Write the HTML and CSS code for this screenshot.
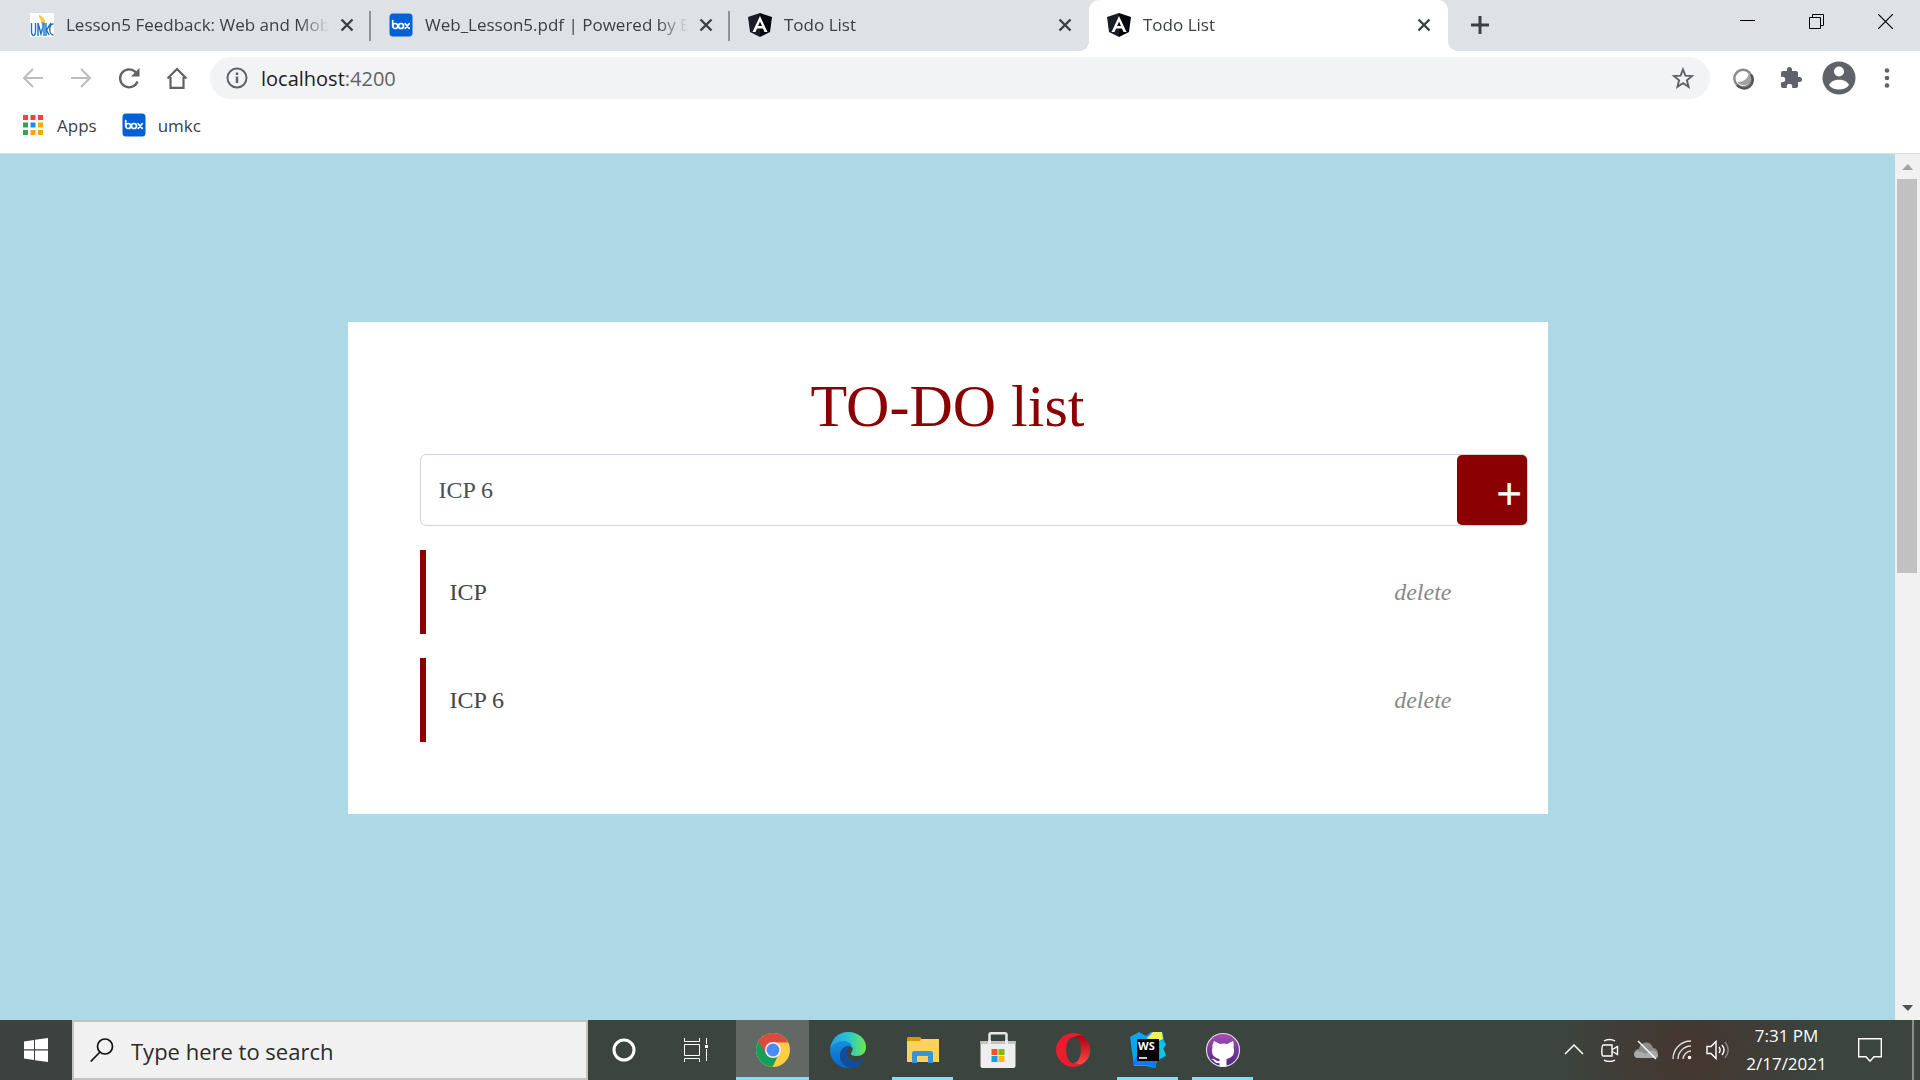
FILE: index.html
```html
<!DOCTYPE html>
<html lang="en">
<head>
<meta charset="utf-8">
<title>Todo List</title>
<link rel="stylesheet" href="styles.css">
</head>
<body>
<svg class="defs" aria-hidden="true">
  <symbol id="close" viewBox="0 0 16 16"><path d="M2.500 2.500l11 11M13.500 2.500l-11 11" fill="none" stroke="#3c4043" stroke-width="2.400"/></symbol>
  <symbol id="angular" viewBox="0 0 24 24"><path d="M12 0L0 4l2 15 10 5z" fill="#1a1d25"/><path d="M12 0l12 4-2 15-10 5z" fill="#05060c"/><path d="M12 3L4.500 19h3l1.600-3.600h5.800l1.600 3.600h3zm0 5.500l2 4.500h-4z" fill="#fff" fill-rule="evenodd"/></symbol>
  <symbol id="box" viewBox="0 0 24 24"><rect x=".5" y=".5" width="23" height="23" rx="3.500" fill="#0061d5"/><g fill="none" stroke="#fff" stroke-width="1.700" stroke-linecap="round" stroke-linejoin="round"><path d="M3.700 7.500v5.500"/><circle cx="6.200" cy="13" r="2.500"/><circle cx="12" cy="13" r="2.500"/><path d="M16.200 10.700l4 4.700M20.200 10.700l-4 4.700"/></g></symbol>
</svg>

<header class="browser">
  <nav class="tabs" aria-label="Tabs">
    <div class="tab">
      <svg class="favicon" viewBox="0 0 24 24"><path d="M0 0h24v24H0z" fill="#fff"/><path d="M9 2c3 1 7 4 6 8l-3 2c1-4-3-5-3-10z" fill="#f5cf2e"/><path d="M1.500 10v8c0 6 4 6 4 0v-8M8 23V10l3 11 3-11v13M16 10v13M21 10l-4.500 7L19 22M23.500 11c-5-1-5 11 0 11" fill="none" stroke="#1c72c4" stroke-width="1.400"/><path d="M12 9l2 10" stroke="#53a5df" stroke-width="1.500"/></svg>
      <span class="tab-title">Lesson5 Feedback: Web and Mobile</span>
      <button class="tab-close" aria-label="Close tab"><svg><use href="#close"/></svg></button>
    </div>
    <div class="tab">
      <svg class="favicon"><use href="#box"/></svg>
      <span class="tab-title">Web_Lesson5.pdf | Powered by Box</span>
      <button class="tab-close" aria-label="Close tab"><svg><use href="#close"/></svg></button>
    </div>
    <div class="tab tab-last">
      <svg class="favicon"><use href="#angular"/></svg>
      <span class="tab-title">Todo List</span>
      <button class="tab-close" aria-label="Close tab"><svg><use href="#close"/></svg></button>
    </div>
    <div class="tab active">
      <svg class="favicon"><use href="#angular"/></svg>
      <span class="tab-title">Todo List</span>
      <button class="tab-close" aria-label="Close tab"><svg><use href="#close"/></svg></button>
    </div>
    <button class="new-tab" aria-label="New tab"><svg viewBox="0 0 18 18"><path d="M9 0v18M0 9h18" stroke="#3c4043" stroke-width="3" fill="none"/></svg></button>
    <div class="window-controls">
      <button aria-label="Minimize"><svg viewBox="0 0 15 15"><path d="M0 6.500h15" stroke="#000"/></svg></button>
      <button aria-label="Restore"><svg viewBox="0 0 15 15"><path d="M.5 3.500h11v11H.5zM3.500 3.500v-3h11v11h-3" fill="none" stroke="#000"/></svg></button>
      <button aria-label="Close"><svg viewBox="0 0 15 15"><path d="M0 0l15 15M15 0L0 15" fill="none" stroke="#000" stroke-width="1.200"/></svg></button>
    </div>
  </nav>

  <div class="toolbar">
    <div class="nav-buttons">
      <button aria-label="Back"><svg viewBox="0 0 24 24"><path d="M22 12H3M12 3l-9 9 9 9" fill="none" stroke="#babcbe" stroke-width="2"/></svg></button>
      <button aria-label="Forward"><svg viewBox="0 0 24 24"><path d="M2 12h19M12 3l9 9-9 9" fill="none" stroke="#babcbe" stroke-width="2"/></svg></button>
      <button aria-label="Reload"><svg viewBox="0 0 24 24"><path d="M20.500 15.500A9 9 0 1 1 19 6.500" fill="none" stroke="#5f6368" stroke-width="2.300"/><path d="M22.500 2v8.500H14z" fill="#5f6368"/></svg></button>
      <button aria-label="Home"><svg viewBox="0 0 24 24"><path d="M5.500 11v10.800h13V11M2.500 12.500L12 3l9.500 9.500" fill="none" stroke="#5f6368" stroke-width="2.200"/></svg></button>
    </div>
    <div class="omnibox">
      <svg class="info" viewBox="0 0 22 22"><circle cx="11" cy="11" r="9.500" fill="none" stroke="#5f6368" stroke-width="2"/><path d="M11 9.500V16M11 5.500V8" stroke="#5f6368" stroke-width="2.400"/></svg>
      <a class="address" href="#">localhost<span class="port">:4200</span></a>
      <button aria-label="Bookmark this page"><svg viewBox="0 0 24 24"><path d="M12 3.500l2.400 6.200 6.600.4-5.100 4.200 1.700 6.500-5.600-3.700-5.600 3.700 1.700-6.500L3 10.100l6.600-.4z" fill="none" stroke="#5f6368" stroke-width="1.900"/></svg></button>
    </div>
    <div class="extensions">
      <button aria-label="Extension"><svg viewBox="0 0 24 24"><circle cx="12" cy="12.500" r="8.700" fill="#fff" stroke="#888" stroke-width="2.400"/><path d="M17.500 6.500c1 5-5 10-11 9.500 3 5.500 14 4 13.500-4 0-2-1-4-2.500-5.500z" fill="#a2a2a2"/><path d="M20 8.500A8.700 8.700 0 0 1 6 19" fill="none" stroke="#555" stroke-width="2.400"/></svg></button>
      <button aria-label="Extensions"><svg viewBox="0 0 24 24"><path d="M20.500 11H19V7c0-1.100-.9-2-2-2h-4V3.500a2.500 2.500 0 0 0-5 0V5H4a2 2 0 0 0-2 2v3.800h1.500a2.700 2.700 0 0 1 0 5.400H2V20c0 1.100.9 2 2 2h3.800v-1.500a2.700 2.700 0 0 1 5.400 0V22H17a2 2 0 0 0 2-2v-4h1.500a2.500 2.500 0 0 0 0-5z" fill="#5f6368"/></svg></button>
      <button class="profile" aria-label="Profile"><svg viewBox="0 0 34 34"><circle cx="17" cy="17" r="16.500" fill="#5f6368"/><circle cx="17" cy="10.500" r="5" fill="#fff"/><path d="M7 24c3-7 17-7 20 0-4 6-16 6-20 0z" fill="#fff"/></svg></button>
      <button aria-label="Menu"><svg viewBox="0 0 24 24"><g fill="#5f6368"><circle cx="12" cy="4.500" r="2.300"/><circle cx="12" cy="12" r="2.300"/><circle cx="12" cy="19.500" r="2.300"/></g></svg></button>
    </div>
  </div>

  <nav class="bookmarks" aria-label="Bookmarks">
    <a href="#"><svg class="apps-icon" viewBox="0 0 20 20"><path d="M0 0h5v5H0zM7.500 0h5v5h-5zM15 0h5v5h-5z" fill="#f9403a"/><path d="M0 7.500h5v5H0zM0 15h5v5H0z" fill="#34a35a"/><path d="M7.500 7.500h5v5h-5z" fill="#1a8cf0"/><path d="M15 7.500h5v5h-5zM7.500 15h5v5h-5zM15 15h5v5h-5z" fill="#f8a80c"/></svg>Apps</a>
    <a href="#"><svg class="box-icon"><use href="#box"/></svg>umkc</a>
  </nav>
</header>

<div class="viewport">
  <main class="page">
    <section class="card">
      <h1>TO-DO list</h1>
      <form class="entry">
        <input type="text" value="ICP 6" aria-label="New item">
        <button type="button" class="add">+</button>
      </form>
      <ul class="items">
        <li><span>ICP</span><button class="delete">delete</button></li>
        <li><span>ICP 6</span><button class="delete">delete</button></li>
      </ul>
    </section>
  </main>
  <aside class="scrollbar" aria-hidden="true">
    <svg viewBox="0 0 25 25"><path d="M7 16l6-6 5 6z" fill="#a3a3a3"/></svg>
    <div class="track"><div class="thumb"></div></div>
    <svg viewBox="0 0 25 25"><path d="M7 10h11l-5 6z" fill="#505050"/></svg>
  </aside>
</div>

<footer class="taskbar">
  <button class="start" aria-label="Start"><svg viewBox="0 0 24 24"><path d="M0 3.400L10 2v9.300H0zM11 1.800L24 0v11.300H11zM0 12.500h10V22L0 20.600zM11 12.500h13V24l-13-1.800z" fill="#fff"/></svg></button>
  <label class="search">
    <svg viewBox="0 0 24 24"><circle cx="15" cy="8.500" r="7.500" fill="none" stroke="#111" stroke-width="1.700"/><path d="M10 14L.7 23.500" stroke="#111" stroke-width="1.700"/></svg>
    <input type="text" placeholder="Type here to search" aria-label="Search">
  </label>
  <div class="system">
    <button aria-label="Cortana"><svg viewBox="0 0 24 24"><circle cx="12" cy="12" r="10" fill="none" stroke="#fff" stroke-width="3"/></svg></button>
    <button aria-label="Task view"><svg viewBox="0 0 24 24"><path d="M.5 0v3.500h15V0M.5 6.500h15v11H.5zM.5 24v-3.500h15V24M22.500 0v6M22.500 11v12" fill="none" stroke="#fff"/><path d="M21 7h3v3h-3z" fill="#fff"/></svg></button>
  </div>
  <div class="apps">
    <button class="app current" aria-label="Chrome"><svg viewBox="0 0 36 36"><circle cx="18" cy="18" r="17" fill="#ffcd42"/><path d="M3.300 9.500A17 17 0 0 0 17.500 35l6.600-13.500L18 11z" fill="#159e5c"/><path d="M3.300 9.500L11 22l7-11.500h15.200A17 17 0 0 0 3.300 9.500z" fill="#db4a3f"/><circle cx="18" cy="18" r="8" fill="#f1f1f1"/><circle cx="18" cy="18" r="6.400" fill="#4c8bf5"/></svg></button>
    <button class="app" aria-label="Edge"><svg viewBox="0 0 36 36"><defs><linearGradient id="edge-top" x1="0" x2="1"><stop offset="0" stop-color="#259be0"/><stop offset=".5" stop-color="#2bc3d5"/><stop offset="1" stop-color="#6bea4b"/></linearGradient><linearGradient id="edge-blue" x2="0" y2="1"><stop stop-color="#1490df"/><stop offset="1" stop-color="#0a64c8"/></linearGradient></defs><path d="M0 18C1 6 9 0 18 0c11 0 18 7 18 15 0 6-4 9-9 9-4 0-7-1-6-3 3-3 2-8-4-9C10 10 3 12 0 18z" fill="url(#edge-top)"/><path d="M0 18C2 12 8 9 14 9c5 0 8 3 8 7-3-4-12-1-12 8 0 7 7 12 13 12-2 0-3 0-5 0C8 36 0 28 0 18z" fill="url(#edge-blue)"/><path d="M17 14c-4 1-7 5-7 10 0 7 6 12 13 12 5-1 9-5 11-8 0-1-1-1-2 0-7 3-14 0-15-6 0-3 1-6 3-7-1-1-2-1-3-1z" fill="#114f9d"/></svg></button>
    <button class="app open" aria-label="File Explorer"><svg viewBox="0 0 36 36"><path d="M2 7c0-1 1-2 2-2h10c1.500 0 2 2 3 2h15c1 0 2 1 2 2v20H2z" fill="#ffc83d"/><path d="M2 9h12l3-2h17v23H2z" fill="#ffd15c"/><path d="M2 7c0-1 1-2 2-2h10c2.500 0 2.500 4 0 4H2z" fill="#dc9500"/><path d="M7 31V21c0-1 1-2 2-2h17c1 0 2 1 2 2v10h-5v-7H12v7z" fill="#3694dc"/></svg></button>
    <button class="app" aria-label="Microsoft Store"><svg viewBox="0 0 36 36"><path d="M9.500 12V3c0-1 .5-1.700 1.500-1.700h14c1 0 1.500.7 1.500 1.700v9" fill="none" stroke="#e8e8e8" stroke-width="2.500"/><path d="M.5 9h35v25c0 1-1 2-2 2h-31c-1 0-2-1-2-2z" fill="#eee"/><path d="M.5 9h35v3H.5z" fill="#c4c4c4"/><path d="M8.200 12V8h2.600v4zM25.200 12V8h2.600v4z" fill="#eee"/><path d="M11.500 17h6v6h-6z" fill="#f25022"/><path d="M18.500 17h6v6h-6z" fill="#7fba00"/><path d="M11.500 24h6v6h-6z" fill="#00a4ef"/><path d="M18.500 24h6v6h-6z" fill="#ffb900"/></svg></button>
    <button class="app" aria-label="Opera"><svg viewBox="0 0 36 36"><defs><linearGradient id="opera-in" x2="0" y2="1"><stop stop-color="#a70014"/><stop offset="1" stop-color="#ff4b4b"/></linearGradient></defs><path d="M12 6c5-5 14-4 18 0 7 6 7 18 0 24-4 4-13 5-18 0z" fill="url(#opera-in)"/><path d="M18 1a17 17 0 1 0 11 30c-3 2-8 1-10-1-8-5-8-20 0-25 3-2 7-2 10-1-3-2-7-3-11-3z" fill="#ed1b2e"/><ellipse cx="18.500" cy="18" rx="7.500" ry="13" fill="#3b443f"/></svg></button>
    <button class="app open" aria-label="WebStorm"><svg viewBox="0 0 36 36"><path d="M0 5l9-5 7 4 5-4h11l2 8 2 5-3 4 3 7-9 5-2 7-9-2-12 0z" fill="#07a7ef"/><path d="M3 33l3-9h19l1 12-9-3z" fill="#087cfa"/><path d="M17 6l6-6h9l1 7-9 4z" fill="#eef34f"/><path d="M30 8l6 4-3 4 3 7-6 3z" fill="#08c9e8"/><path d="M7 7h22v22H7z" fill="#000"/><path d="M9 26h8" stroke="#fff" stroke-width="1.600"/><text class="ws" x="8" y="18">WS</text></svg></button>
    <button class="app open" aria-label="GitHub Desktop"><svg viewBox="0 0 36 36"><defs><linearGradient id="gh" x2="0" y2="1"><stop stop-color="#a84db4"/><stop offset="1" stop-color="#4d2683"/></linearGradient></defs><circle cx="18" cy="18" r="16.500" fill="url(#gh)" stroke="#ddd" stroke-width="1.200"/><path d="M9 9l6 3c2-.7 5-.7 7 0l6-3c1 3 1 4 .5 6 2 8-2 11-7 12v7.200c-2 .4-5 .4-7 0V31c-5 1-5-3-8-4 4-1 4 3 8 2v-2c-5-1-9-4-7-12-.5-2 .5-3 1.500-6z" fill="#fff"/></svg></button>
  </div>
  <div class="tray">
    <svg viewBox="0 0 24 24"><path d="M3 16l9-9 9 9" fill="none" stroke="#fff" stroke-width="1.500"/></svg>
    <svg viewBox="0 0 24 24"><path d="M5 7h9v11H5c-2 0-1-11 0-11zM14.500 11.500l5-3v8l-5-3M6 3c3-2 8-2 11 0M6 22c3 2 8 2 11 0" fill="none" stroke="#fff" stroke-width="1.400"/></svg>
    <svg viewBox="0 0 24 24"><path d="M5 20c-7 0-6-9 0-9 1-8 12-9 14-1 6 0 7 10 0 10z" fill="#8b8c89"/><path d="M3 20c-5-1-3-8 2-7l7 3c3-6 12-4 12 2 0 2-2 2-4 2z" fill="#aaa"/><path d="M4 3l18 18" stroke="#fff" stroke-width="1.500"/></svg>
    <svg viewBox="0 0 24 24"><g fill="none" stroke="#ddd" stroke-width="1.400"><path d="M3 21C3 11 11 3 21 3M8 21C8 14 14 8 21 8M13 21c0-4 4-8 8-8"/></g><circle cx="19.500" cy="19.500" r="1.800" fill="#fff"/></svg>
    <svg viewBox="0 0 24 24"><path d="M1 8.500h4l5-5v17l-5-5H1z" fill="none" stroke="#fff" stroke-width="1.400"/><path d="M13 9c1.500 2 1.500 4 0 6M16 7c2.500 3 2.500 7 0 10" fill="none" stroke="#fff" stroke-width="1.400"/><path d="M19 4c4 5 4 11 0 16" fill="none" stroke="#888" stroke-width="1.400"/></svg>
  </div>
  <div class="clock"><span>7:31 PM</span><span>2/17/2021</span></div>
  <button class="notice" aria-label="Notifications"><svg viewBox="0 0 24 24"><path d="M.7.7h22.600v18H16l-4 4.500-4-4.500H.7z" fill="none" stroke="#fff" stroke-width="1.400"/></svg></button>
  <div class="peek"></div>
</footer>
</body>
</html>
```
FILE: styles.css
```css
* { box-sizing: border-box; }

body {
  margin: 0;
  min-height: 100vh;
  display: flex;
  flex-direction: column;
  font-family: "Open Sans", "Noto Sans", sans-serif;
  font-size: 17px;
  color: #3c4043;
}

button {
  border: 0;
  padding: 0;
  background: none;
  font: inherit;
  color: inherit;
  display: flex;
  align-items: center;
  justify-content: center;
}

a { color: inherit; text-decoration: none; }
svg { display: block; flex: none; width: 24px; height: 24px; }
.defs { position: absolute; width: 0; height: 0; }

/* Browser chrome */
.browser {
  background: #fff;
  border-bottom: 1px solid #dadce0;
}

.tabs {
  display: flex;
  height: 51px;
  padding-left: 12px;
  background: #dee1e6;
}

.tab {
  flex: 0 1 359px;
  min-width: 0;
  display: flex;
  align-items: center;
  padding: 0 16px 2px 18px;
  background: linear-gradient(#8f9398, #8f9398) right 0 top 11px / 2px 30px no-repeat;
}

.tab-last { background: none; }
.tab.active {
  position: relative;
  background: #fff;
  border-radius: 10px 10px 0 0;
}

.tab.active::before,
.tab.active::after {
  content: "";
  position: absolute;
  bottom: 0;
  width: 10px;
  height: 10px;
}
.tab.active::before { right: 100%; background: radial-gradient(circle at 0 0, transparent 10px, #fff 10px); }
.tab.active::after { left: 100%; background: radial-gradient(circle at 100% 0, transparent 10px, #fff 10px); }

.tab-title {
  flex: 1;
  margin: 0 10px 0 12px;
  overflow: hidden;
  white-space: nowrap;
  line-height: 24px;
  -webkit-mask-image: linear-gradient(to left, transparent, #000 30px);
  mask-image: linear-gradient(to left, transparent, #000 30px);
}

.tab-close { width: 16px; height: 24px; }
.tab-close svg { width: 16px; height: 16px; }
.new-tab { width: 64px; padding-bottom: 2px; }
.new-tab svg { width: 18px; height: 18px; }

.window-controls {
  display: flex;
  margin-left: auto;
  padding-bottom: 8px;
}
.window-controls button { width: 69px; }
.window-controls svg { width: 15px; height: 15px; }

.toolbar {
  display: flex;
  align-items: center;
  height: 54px;
}

.nav-buttons { display: flex; gap: 24px; padding-left: 21px; margin-right: 21px; }

.omnibox {
  flex: 1;
  display: flex;
  align-items: center;
  height: 42px;
  padding: 0 15px 0 16px;
  border-radius: 21px;
  background: #f1f3f4;
  font-size: 20px;
}
.info { width: 22px; height: 22px; }
.address { flex: 1; margin-left: 13px; color: #202124; }
.port { color: #5f6368; }

.extensions {
  display: flex;
  align-items: center;
  gap: 24px;
  padding: 0 21px;
}
.profile svg { width: 34px; height: 34px; }
.extensions .profile { margin: 0 -5px; }

.bookmarks {
  display: flex;
  gap: 25px;
  height: 48px;
  padding: 0 23px 8px;
}
.bookmarks a { display: flex; align-items: center; gap: 14px; }
.bookmarks .box-icon { margin-right: -2px; }
.apps-icon { width: 20px; height: 20px; }

/* Page */
.viewport { flex: 1; display: flex; }

.page {
  flex: 1;
  min-width: 0;
  padding-top: 168px;
  background: #add8e6;
  font-family: "Liberation Serif", "Times New Roman", serif;
  font-size: 24px;
}

.card {
  max-width: 1200px;
  margin: 0 auto;
  padding: 48px 72px 72px;
  background: #fff;
}

h1 {
  margin: 0 0 12px;
  font-size: 60px;
  line-height: 72px;
  font-weight: 400;
  text-align: center;
  color: #8b0000;
}

.entry {
  display: flex;
  height: 72px;
  margin: 0 -52px 24px 0;
  border: 1px solid #ced4da;
  border-radius: 6px;
}
.entry input {
  flex: 1;
  min-width: 0;
  padding: 0 18px;
  border: 0;
  border-radius: 6px;
  background: none;
  font: inherit;
  color: #495057;
}
.add {
  width: 70px;
  justify-content: flex-end;
  padding: 10px 5px 0 0;
  border-radius: 5px;
  background: #8b0000;
  color: #fff;
  font-size: 44px;
  line-height: 60px;
  -webkit-text-stroke: 1px #fff;
}

.items {
  display: grid;
  gap: 24px;
  margin: 0;
  padding: 0;
  list-style: none;
}
.items li {
  display: flex;
  align-items: center;
  justify-content: space-between;
  height: 84px;
  padding: 0 24px;
  border-left: 6px solid #8b0000;
  color: #444;
}
.delete { font-style: italic; color: #888; }

.scrollbar {
  display: flex;
  flex-direction: column;
  width: 25px;
  background: #f1f1f1;
}
.scrollbar svg { width: 25px; height: 25px; }
.track { flex: 1; padding: 0 3px 0 2px; }
.thumb { height: 394px; background: #c1c1c1; }

/* Taskbar */
.taskbar {
  display: flex;
  height: 60px;
  background: radial-gradient(ellipse 130px 120px at 88% 50%, #46352f, transparent), #3b443f;
  color: #fff;
}
.start { width: 72px; background: #3d413f; }

.search {
  flex: 0 1 516px;
  display: flex;
  align-items: center;
  gap: 17px;
  padding: 0 16px;
  border: 2px solid #c2c2c2;
  background: #f1f1f1;
}
.search input {
  flex: 1;
  min-width: 0;
  padding: 2px 0 0;
  border: 0;
  background: none;
  font: inherit;
  font-size: 22px;
}
.search input::placeholder { color: #2b2b2b; opacity: 1; }

.system { display: flex; }
.system button { width: 72px; }

.apps { display: flex; gap: 2px; margin-left: 4px; }
.app { position: relative; width: 73px; }
.app svg { width: 36px; height: 36px; }
.app.current { background: #626965; }
.app.open::after,
.app.current::after {
  content: "";
  position: absolute;
  left: 6px;
  right: 6px;
  bottom: 0;
  height: 3px;
  background: #76e3fb;
}
.app.current::after { left: 0; right: 0; }
.ws { font: 700 11px "Open Sans", sans-serif; fill: #fff; }

.tray {
  display: flex;
  align-items: center;
  gap: 12px;
  margin-left: auto;
}
.clock {
  display: flex;
  flex-direction: column;
  justify-content: center;
  width: 113px;
  text-align: center;
  line-height: 28px;
}
.notice { width: 54px; }
.peek { width: 8px; margin-left: 15px; border-left: 2px solid #8b908d; }
```
